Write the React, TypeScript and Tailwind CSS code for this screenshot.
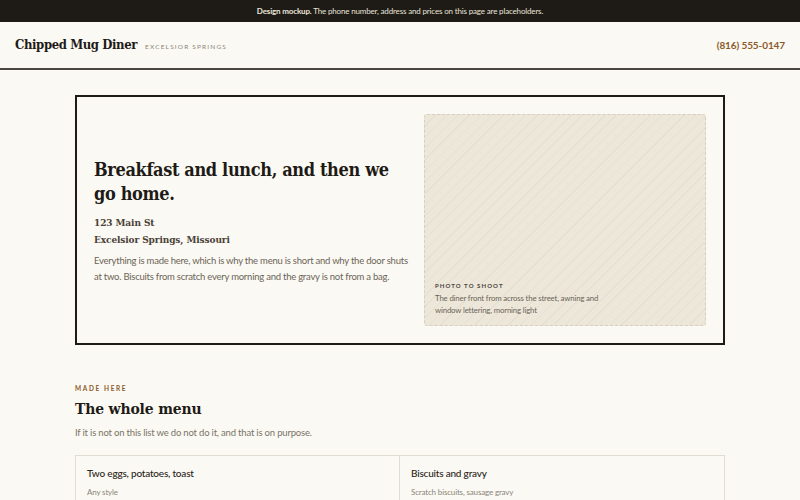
const slab = "font-['DejaVu_Serif_Condensed','DejaVu_Serif',serif]";
const sans = "font-['Lato','Liberation_Sans',sans-serif]";

const menu = [
  { name: 'Two eggs, potatoes, toast', note: 'Any style' },
  { name: 'Biscuits and gravy', note: 'Scratch biscuits, sausage gravy' },
];

export default function App() {
  return (
    <div className={`min-h-screen bg-[#fbf9f3] text-[#1e1b17] ${sans}`}>
      <div className="flex h-[22px] items-center justify-center bg-[#1e1b17] text-[8px] tracking-[-0.02em] text-[#e9e4d8]">
        <span className="font-bold">Design mockup.</span>&nbsp;The phone number, address and prices on this page are placeholders.
      </div>

      <header className="flex h-[48px] items-center justify-between border-b-2 border-[#4a4740] px-[15px]">
        <div className="flex items-baseline gap-[8px]">
          <span className={`${slab} text-[13px] font-bold tracking-[-0.03em]`}>Chipped Mug Diner</span>
          <span className="text-[6.5px] uppercase tracking-[0.18em] text-[#8a857a]">Excelsior Springs</span>
        </div>
        <span className="text-[10px] font-bold tracking-[-0.01em] text-[#8b5a2b]">(816) 555-0147</span>
      </header>

      <main className="mx-auto w-[650px] pt-[25px]">
        <section className="grid grid-cols-[1fr_282px] gap-[16px] border-2 border-[#1e1b17] p-[17px]">
          <div className="flex flex-col justify-center">
            <h1 className={`${slab} mt-[2px] text-[18px] font-bold leading-[24px] tracking-[-0.02em]`}>
              Breakfast and lunch, and then we go home.
            </h1>
            <p className={`${slab} mt-[8px] text-[10px] font-bold leading-[17px] tracking-[-0.01em] text-[#4a4238]`}>123 Main St</p>
            <p className={`${slab} text-[10px] font-bold leading-[17px] tracking-[-0.01em] text-[#4a4238]`}>Excelsior Springs, Missouri</p>
            <p className="mt-[5px] text-[9.5px] leading-[15.5px] tracking-[-0.025em] text-[#6b6458]">
              Everything is made here, which is why the menu is short and why the door shuts at two. Biscuits from
              scratch every morning and the gravy is not from a bag.
            </p>
          </div>

          <div className="flex h-[212px] flex-col justify-end rounded-[3px] border border-dashed border-[#d8d0bf] bg-[#ede7da] bg-[repeating-linear-gradient(135deg,transparent_0px,transparent_7px,rgba(150,130,100,0.07)_7px,rgba(150,130,100,0.07)_8px)] px-[10px] pb-[9px]">
            <p className="text-[6px] font-bold uppercase tracking-[0.18em] text-[#4a4540]">Photo to shoot</p>
            <p className="mt-[2px] w-[170px] text-[7.8px] leading-[12px] tracking-[-0.02em] text-[#6b6458]">
              The diner front from across the street, awning and window lettering, morning light
            </p>
          </div>
        </section>

        <section className="pt-[39px]">
          <p className="text-[6.5px] font-bold uppercase tracking-[0.25em] text-[#8b5a2b]">Made here</p>
          <h2 className={`${slab} mt-[4px] text-[15.5px] font-bold leading-[22px] tracking-[-0.01em]`}>The whole menu</h2>
          <p className="mt-[6px] text-[9.5px] tracking-[-0.02em] text-[#7a7468]">
            If it is not on this list we do not do it, and that is on purpose.
          </p>

          <div className="mt-[15px] grid grid-cols-2 border border-[#e2ddd2]">
            {menu.map((item, i) => (
              <div key={item.name} className={`px-[11px] pt-[10px] pb-[14px] ${i === 0 ? 'border-r border-[#e2ddd2]' : ''}`}>
                <p className="text-[10px] font-medium tracking-[-0.02em] text-[#2a2520]">{item.name}</p>
                <p className="mt-[5px] text-[8px] tracking-[-0.02em] text-[#8a857a]">{item.note}</p>
              </div>
            ))}
          </div>
        </section>
      </main>
    </div>
  );
}
